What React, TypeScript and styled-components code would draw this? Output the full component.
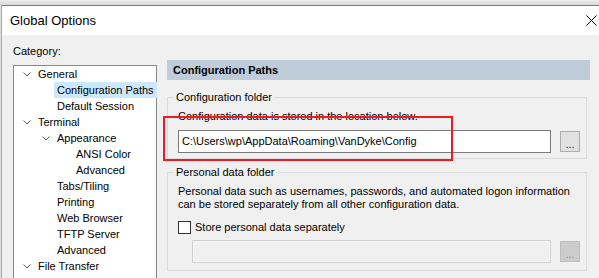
import React from 'react';
import styled, { createGlobalStyle } from 'styled-components';

const GlobalStyle = createGlobalStyle`
  html, body {
    margin: 0;
    padding: 0;
  }
  body {
    font-family: "Liberation Sans", Arial, sans-serif;
    font-size: 11px;
    color: #000;
    background: #e2e2e2;
  }
`;

const Screen = styled.div`
  width: 599px;
  height: 278px;
  overflow: hidden;
  box-sizing: border-box;
  padding: 5px 0 0 1px;
  background: linear-gradient(#ececec, #d8d8d8 5px, #e0e0e0 5px);
`;

const Window = styled.div`
  display: flex;
  flex-direction: column;
  border-top: 1px solid #7c7c7c;
  border-left: 1px solid #a8a8a8;
`;

const TitleBar = styled.div`
  height: 29px;
  display: flex;
  align-items: center;
  justify-content: space-between;
  padding: 0 2px 0 8px;
  background: #fff;
`;

const Title = styled.span`
  font-size: 13px;
  color: #000;
`;

const CloseIcon = styled.svg`
  display: block;
  width: 11px;
  height: 11px;
`;

const Body = styled.div`
  display: flex;
  height: 260px;
  padding: 0 9px 0 11px;
  background: #f0f0f0;
`;

const LeftColumn = styled.div`
  width: 144px;
  display: flex;
  flex-direction: column;
`;

const CategoryLabel = styled.div`
  padding-top: 8px;
  line-height: 16px;
`;

const Tree = styled.div`
  flex: 1;
  margin-top: 6px;
  border: 1px solid #828790;
  background: #fff;
`;

const Row = styled.div<{ $level: number }>`
  height: 16px;
  display: flex;
  align-items: center;
  padding-left: ${(p) => 5 + p.$level * 19}px;
`;

const Expander = styled.span`
  width: 16px;
  height: 16px;
  display: flex;
  align-items: center;
  justify-content: center;
  flex: none;
`;

const NodeLabel = styled.span<{ $selected?: boolean }>`
  padding: 0 3px;
  line-height: 16px;
  white-space: nowrap;
  background: ${(p) => (p.$selected ? '#cce8ff' : 'transparent')};
`;

const RightColumn = styled.div`
  position: relative;
  flex: 1;
  margin-left: 10px;
  padding-top: 25px;
`;

const PanelHeader = styled.div`
  height: 20px;
  line-height: 20px;
  padding-left: 6px;
  font-weight: bold;
  background: #bfcddb;
`;

const Group = styled.fieldset<{ $gap: number }>`
  min-width: 0;
  margin: ${(p) => p.$gap}px 3px 0 0;
  padding: 0 6px 0 10px;
  border: 1px solid #dcdcdc;
`;

const Legend = styled.legend`
  margin-left: -4px;
  padding: 0 2px;
  line-height: 16px;
`;

const Description = styled.div<{ $pad: number; $lh: number }>`
  padding-top: ${(p) => p.$pad}px;
  line-height: ${(p) => p.$lh}px;
`;

const PathRow = styled.div<{ $top: number; $bottom: number; $indent?: number }>`
  display: flex;
  align-items: center;
  margin: ${(p) => p.$top}px 0 ${(p) => p.$bottom}px ${(p) => p.$indent ?? 0}px;
`;

const PathInput = styled.div<{ $disabled?: boolean }>`
  flex: 1;
  height: 21px;
  line-height: 21px;
  padding-left: 3px;
  border: 1px solid ${(p) => (p.$disabled ? '#d0d0d0' : '#7a7a7a')};
  background: ${(p) => (p.$disabled ? '#f0f0f0' : '#fff')};
  box-shadow: ${(p) => (p.$disabled ? 'inset 0 0 0 1px #f7f7f7' : 'none')};
  white-space: nowrap;
  overflow: hidden;
`;

const BrowseButton = styled.div<{ $disabled?: boolean }>`
  width: 18px;
  height: 19px;
  margin-left: 9px;
  display: flex;
  align-items: flex-end;
  justify-content: center;
  line-height: 14px;
  border: 1px solid ${(p) => (p.$disabled ? '#bfbfbf' : '#adadad')};
  background: ${(p) => (p.$disabled ? '#cccccc' : '#e1e1e1')};
  color: ${(p) => (p.$disabled ? '#838383' : '#1a1a60')};
`;

const CheckRow = styled.label`
  display: flex;
  align-items: center;
  margin-top: 8px;
  line-height: 16px;
`;

const CheckBox = styled.span`
  width: 11px;
  height: 11px;
  margin-right: 4px;
  border: 1px solid #333;
  background: #fff;
`;

const Highlight = styled.div`
  position: absolute;
  left: -4px;
  top: 81px;
  width: 286px;
  height: 41px;
  border: 2px solid #ed1c24;
  pointer-events: none;
`;

type Node = { label: string; level: number; open?: boolean; selected?: boolean };

const nodes: Node[] = [
  { label: 'General', level: 0, open: true },
  { label: 'Configuration Paths', level: 1, selected: true },
  { label: 'Default Session', level: 1 },
  { label: 'Terminal', level: 0, open: true },
  { label: 'Appearance', level: 1, open: true },
  { label: 'ANSI Color', level: 2 },
  { label: 'Advanced', level: 2 },
  { label: 'Tabs/Tiling', level: 1 },
  { label: 'Printing', level: 1 },
  { label: 'Web Browser', level: 1 },
  { label: 'TFTP Server', level: 1 },
  { label: 'Advanced', level: 1 },
  { label: 'File Transfer', level: 0, open: true },
];

const Chevron = () => (
  <svg width="8" height="5" viewBox="0 0 8 5">
    <path d="M0.5 0.5 L4 4 L7.5 0.5" fill="none" stroke="#5a5a5a" strokeWidth="1" />
  </svg>
);

const App: React.FC = () => (
  <>
    <GlobalStyle />
    <Screen>
      <Window>
        <TitleBar>
          <Title>Global Options</Title>
          <CloseIcon viewBox="0 0 11 11">
            <path d="M0.5 0.5 L10.5 10.5 M10.5 0.5 L0.5 10.5" stroke="#000" strokeWidth="1" />
          </CloseIcon>
        </TitleBar>
        <Body>
          <LeftColumn>
            <CategoryLabel>Category:</CategoryLabel>
            <Tree>
              {nodes.map((node, i) => (
                <Row key={i} $level={node.level}>
                  <Expander>{node.open && <Chevron />}</Expander>
                  <NodeLabel $selected={node.selected}>{node.label}</NodeLabel>
                </Row>
              ))}
            </Tree>
          </LeftColumn>
          <RightColumn>
            <PanelHeader>Configuration Paths</PanelHeader>
            <Group $gap={9}>
              <Legend>Configuration folder</Legend>
              <Description $pad={3} $lh={16}>
                Configuration data is stored in the location below.
              </Description>
              <PathRow $top={6} $bottom={5}>
                <PathInput>C:\Users\wp\AppData\Roaming\VanDyke\Config</PathInput>
                <BrowseButton>...</BrowseButton>
              </PathRow>
            </Group>
            <Group $gap={5}>
              <Legend>Personal data folder</Legend>
              <Description $pad={5} $lh={13}>
                Personal data such as usernames, passwords, and automated logon information
                <br />
                can be stored separately from all other configuration data.
              </Description>
              <CheckRow>
                <CheckBox />
                Store personal data separately
              </CheckRow>
              <PathRow $top={5} $bottom={7} $indent={14}>
                <PathInput $disabled />
                <BrowseButton $disabled>...</BrowseButton>
              </PathRow>
            </Group>
            <Highlight />
          </RightColumn>
        </Body>
      </Window>
    </Screen>
  </>
);

export default App;
